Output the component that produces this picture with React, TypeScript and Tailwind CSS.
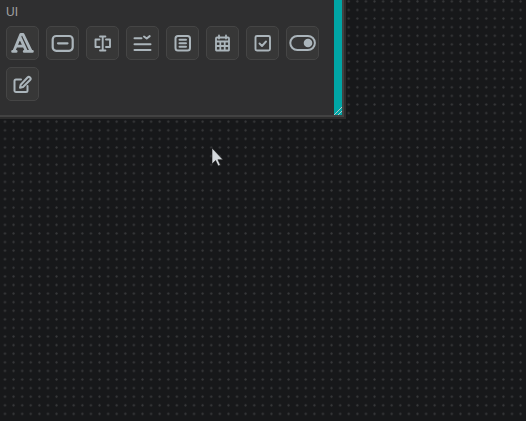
import React from "react";

const Ic = ({ children, sw = 2 }: { children: React.ReactNode; sw?: number }) => (
  <svg width={31} height={32} viewBox="0 0 31 32" fill="none" stroke="#abb5bb" strokeWidth={sw} strokeLinecap="round" strokeLinejoin="round">
    {children}
  </svg>
);

const Btn = ({ children }: { children: React.ReactNode }) => (
  <div className="flex h-[34px] w-[33px] items-center justify-center rounded-[5px] border border-[#454545] bg-[#373737]">{children}</div>
);

export default function App() {
  return (
    <div className="relative h-[421px] w-[526px] overflow-hidden bg-[#17181a]">
      <div className="absolute inset-0 bg-[radial-gradient(circle_at_center,#38393b_0,#303133_0.9px,transparent_1.5px)] bg-[size:8.6px_8.6px] bg-[position:0.7px_5.7px]" />
      <div className="relative flex h-[117px] w-[344px] border-r-2 border-b-2 border-[#424242] shadow-[0_0_0_2px_#2c2c2c]">
        <div className="flex w-[334px] flex-col bg-[#2f2f30] pl-[6px] pt-[5px] font-['Liberation_Sans',sans-serif]">
          <div className="h-[21px] text-[12px] leading-[14px] text-[#a3a3a3]">UI</div>
          <div className="flex w-[320px] flex-wrap gap-x-[7px] gap-y-[7px]">
            <Btn>
              <Ic sw={2.5}>
                <g transform="translate(1,3.2) scale(1.16,1.06)">
                  <path d="M4 20h3M14 20h7M6.9 15h6.9M10.2 6.3 16 20M5 20 11 4h2l7 16" />
                </g>
              </Ic>
            </Btn>
            <Btn>
              <Ic sw={2.2}>
                <rect x="5.7" y="9" width="20" height="14.8" rx="3.5" />
                <path d="M11 16.3h9.5" />
              </Ic>
            </Btn>
            <Btn>
              <Ic sw={1.9}>
                <path d="M12.5 12.5H8.5v7.5h4M19 12.5h4v7.5h-4M13 9.5h5.4M13 23.5h5.4M15.7 9.5v14" />
              </Ic>
            </Btn>
            <Btn>
              <Ic sw={2}>
                <path d="M7.5 11.3h7M7.5 17.3h16M7.5 23h16M17 9.5l2.7 2 3-2.4" />
              </Ic>
            </Btn>
            <Btn>
              <Ic sw={2}>
                <rect x="8.5" y="9" width="14.5" height="14.5" rx="2.5" />
                <path d="M12.5 12.8h6.5M12.5 16.3h6.5M12.5 19.8h6.5" />
              </Ic>
            </Btn>
            <Btn>
              <Ic sw={1.8}>
                <path d="M9 11.5a1 1 0 0 1 1-1h11a1 1 0 0 1 1 1V23a.5.5 0 0 1-.5.5h-12a.5.5 0 0 1-.5-.5ZM12 8.5v3M19 8.5v3M9 14.5h13M9 19h13M13.3 14.5v9M17.7 14.5v9" />
              </Ic>
            </Btn>
            <Btn>
              <Ic sw={1.9}>
                <rect x="8.5" y="9" width="14.5" height="14.5" rx="1.5" />
                <path d="m12.5 16.5 2.5 2.5 4-4.5" />
              </Ic>
            </Btn>
            <Btn>
              <Ic sw={2}>
                <rect x="3.3" y="9" width="24.6" height="14" rx="7" />
                <circle cx="21" cy="16" r="4.3" fill="#abb5bb" stroke="none" />
              </Ic>
            </Btn>
            <Btn>
              <Ic sw={2}>
                <path d="M14 11.5H9a1.5 1.5 0 0 0-1.5 1.5v10A1.5 1.5 0 0 0 9 24h10a1.5 1.5 0 0 0 1.5-1.5V18" />
                <path d="M20.5 9.5a1.7 1.7 0 0 1 2.6 2.5L16 19l-3 .7.7-3Z" />
              </Ic>
            </Btn>
          </div>
        </div>
        <div className="w-[8px] bg-[#00a5a5]" />
        <svg className="absolute bottom-[-1px] right-[-1px]" width="10" height="10" viewBox="0 0 10 10" fill="none" stroke="#b8c6c6" strokeWidth="1">
          <path d="M1 9 9 1M5 9l4-4" />
        </svg>
      </div>
      <svg className="absolute left-[211px] top-[147px]" width="13" height="20" viewBox="0 0 13 20">
        <path d="M1 1v16l3.6-3.5 2.6 5.5 2.2-1-2.5-5.3H12Z" fill="#d4d8dc" stroke="#1a1a1a" strokeWidth="0.6" />
      </svg>
    </div>
  );
}
